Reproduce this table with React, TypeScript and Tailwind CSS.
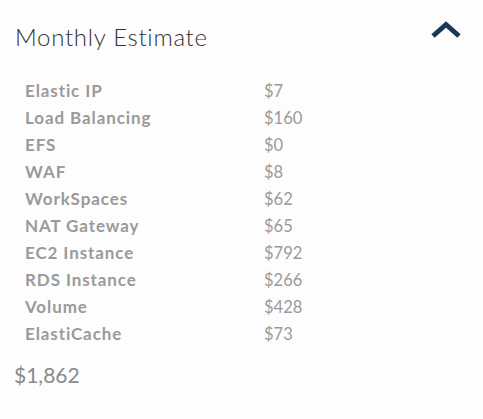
const items = [
  { name: "Elastic IP", cost: "$7" },
  { name: "Load Balancing", cost: "$160" },
  { name: "EFS", cost: "$0" },
  { name: "WAF", cost: "$8" },
  { name: "WorkSpaces", cost: "$62" },
  { name: "NAT Gateway", cost: "$65" },
  { name: "EC2 Instance", cost: "$792" },
  { name: "RDS Instance", cost: "$266" },
  { name: "Volume", cost: "$428" },
  { name: "ElastiCache", cost: "$73" },
];

const App = () => {
  return (
    <div className="w-[483px] h-[419px] bg-[#fdfdfd] font-['Lato',sans-serif]">
      <div className="flex items-start justify-between pl-[15px] pr-[21px] pt-[22px]">
        <h2 className="text-[24px] font-light tracking-[0.7px] text-[#333] leading-[30px]">
          Monthly Estimate
        </h2>
        <svg width="32" height="18" viewBox="0 0 32 18" className="-mt-[1px]">
          <path
            d="M3 15 L16 3.5 L29 15"
            fill="none"
            stroke="#173a58"
            strokeWidth="5"
          />
        </svg>
      </div>

      <div className="mt-[25px] pl-[25px]">
        {items.map((item) => (
          <div key={item.name} className="flex h-[27px] items-baseline leading-[27px]">
            <span className="w-[239px] text-[17px] font-bold tracking-[0.9px] text-[#9a9a9a]">
              {item.name}
            </span>
            <span className="text-[16.5px] text-[#9a9a9a]">{item.cost}</span>
          </div>
        ))}
      </div>

      <p className="mt-[12px] pl-[14px] text-[21px] text-[#8a8a8a]">$1,862</p>
    </div>
  );
};

export default App;
